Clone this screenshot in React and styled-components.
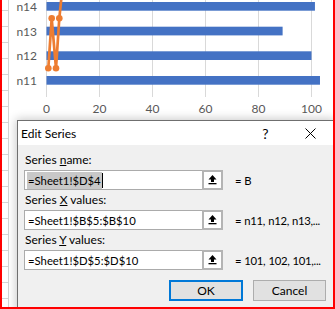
import React from "react";
import styled, { createGlobalStyle } from "styled-components";

const Global = createGlobalStyle`
  html, body { margin: 0; padding: 0; background: #fff; }
`;

const Frame = styled.div`
  position: relative;
  width: 335px;
  height: 309px;
  box-sizing: border-box;
  border: 2px solid #ff0000;
  border-top: none;
  overflow: hidden;
  display: flex;
  background: #fff;
`;

const SheetStrip = styled.div`
  width: 6px;
  flex: none;
  border-right: 1px solid #d4d4d4;
  background-color: #fff;
  background-image: repeating-linear-gradient(
    to bottom,
    transparent 0,
    transparent 15px,
    #d4d4d4 15px,
    #d4d4d4 16px
  );
  background-position: 0 -5px;
`;

const ChartPanel = styled.div`
  flex: 1;
  background: #fff;
  svg {
    display: block;
  }
`;

const Dialog = styled.div`
  position: absolute;
  left: 15px;
  top: 120px;
  width: 317px;
  height: 200px;
  box-sizing: border-box;
  border: 1px solid #6f6f6f;
  background: #f0f0f0;
  box-shadow: 0 0 9px 1px rgba(0, 0, 0, 0.22);
  display: flex;
  flex-direction: column;
  font-family: Lato, "Open Sans", sans-serif;
  font-size: 12px;
  color: #000;
`;

const TitleBar = styled.div`
  height: 24px;
  background: #fff;
  display: flex;
  align-items: center;
`;

const Title = styled.div`
  flex: 1;
  padding-left: 3px;
  font-size: 12px;
`;

const CaptionButton = styled.div`
  width: 45px;
  height: 24px;
  display: flex;
  align-items: center;
  justify-content: center;
  font-size: 14px;
`;

const Body = styled.div`
  padding: 5px 7px 0 6px;
  display: flex;
  flex-direction: column;
`;

const Label = styled.div`
  line-height: 16px;
  margin: 2px 0;
  padding-left: 1px;
  white-space: nowrap;
`;

const FieldRow = styled.div`
  display: flex;
  align-items: center;
  height: 20px;
  gap: 12px;
  font-size: 11.3px;
`;

const RefInput = styled.div`
  display: flex;
  width: 199px;
  height: 20px;
  flex: none;
`;

const TextBox = styled.div`
  flex: 1;
  box-sizing: border-box;
  background: #fff;
  border: 1px solid #ababab;
  border-right: none;
  padding-left: 2px;
  display: flex;
  align-items: center;
  white-space: nowrap;
  overflow: hidden;
`;

const Selection = styled.span`
  display: inline-block;
  height: 17px;
  line-height: 17px;
  padding-left: 1px;
  padding-right: 1px;
  background: #c8c8c8;
`;

const Caret = styled.span`
  display: inline-block;
  width: 1px;
  height: 15px;
  background: #000;
`;

const Value = styled.span`
  padding-left: 1px;
`;

const RefButton = styled.div`
  width: 21px;
  height: 20px;
  box-sizing: border-box;
  border: 2px solid #b4b4b4;
  background: #fff;
  display: flex;
  align-items: center;
  justify-content: center;
`;

const Result = styled.div`
  white-space: nowrap;
  letter-spacing: -0.3px;
  word-spacing: 0.5px;
`;

const ButtonRow = styled.div`
  display: flex;
  justify-content: flex-end;
  gap: 10px;
  margin-top: 10px;
`;

const DialogButton = styled.div`
  width: ${(p) => p.$w}px;
  height: 21px;
  box-sizing: border-box;
  background: #e1e1e1;
  border: ${(p) => (p.$default ? "2px solid #0078d7" : "1px solid #adadad")};
  display: flex;
  align-items: center;
  justify-content: center;
`;

const UploadIcon = () => (
  <svg width="9" height="10" viewBox="0 0 9 10">
    <polygon points="4.5,0 0.5,4.5 3,4.5 3,7 6,7 6,4.5 8.5,4.5" fill="#000" />
    <rect x="0.5" y="8" width="8" height="1.3" fill="#000" />
  </svg>
);

const CloseIcon = () => (
  <svg width="11" height="11" viewBox="0 0 11 11">
    <path d="M0.5 0.5 L10.5 10.5 M10.5 0.5 L0.5 10.5" stroke="#000" strokeWidth="1" fill="none" />
  </svg>
);

const X0 = 46.5;
const SCALE = 2.65;
const bars = [
  { label: "n14", y: 2, v: 101.3 },
  { label: "n13", y: 26.7, v: 89.1 },
  { label: "n12", y: 51.3, v: 100 },
  { label: "n11", y: 76, v: 103.2 },
];
const ticks = [0, 20, 40, 60, 80, 100];
const linePts = [
  [48.3, 68.3],
  [51.7, 18.3],
  [56, 68.3],
  [59.3, 18.3],
];

const Chart = () => (
  <svg width="324" height="307" viewBox="9 0 324 307">
    {ticks.map((t) => (
      <line
        key={t}
        x1={X0 + t * SCALE}
        x2={X0 + t * SCALE}
        y1={0}
        y2={97}
        stroke="#d9d9d9"
        strokeWidth="1"
      />
    ))}
    {bars.map((b) => (
      <g key={b.label}>
        <rect x={X0} y={b.y} width={b.v * SCALE} height={8.7} fill="#4472c4" />
        <text
          x={37}
          y={b.y + 4.6}
          textAnchor="end"
          dominantBaseline="central"
          fontFamily="Lato, sans-serif"
          fontSize="12"
          fill="#595959"
        >
          {b.label}
        </text>
      </g>
    ))}
    {ticks.map((t) => (
      <text
        key={"l" + t}
        x={X0 + t * SCALE}
        y={108}
        textAnchor="middle"
        dominantBaseline="central"
        fontFamily="Lato, sans-serif"
        fontSize="12"
        fill="#595959"
      >
        {t}
      </text>
    ))}
    <polyline
      points={[...linePts, [61.6, -4]].map((p) => p.join(",")).join(" ")}
      fill="none"
      stroke="#ed7d31"
      strokeWidth="2.7"
      strokeLinejoin="round"
    />
    {linePts.map((p, i) => (
      <circle key={i} cx={p[0]} cy={p[1]} r="3.3" fill="#ed7d31" />
    ))}
  </svg>
);

const fields = [
  {
    label: (
      <>
        Series <u>n</u>ame:
      </>
    ),
    value: "=Sheet1!$D$4",
    selected: true,
    result: "= B",
  },
  {
    label: (
      <>
        Series <u>X</u> values:
      </>
    ),
    value: "=Sheet1!$B$5:$B$10",
    result: "= n11, n12, n13,...",
  },
  {
    label: (
      <>
        Series <u>Y</u> values:
      </>
    ),
    value: "=Sheet1!$D$5:$D$10",
    result: "= 101, 102, 101,...",
  },
];

export default function App() {
  return (
    <>
      <Global />
      <Frame>
        <SheetStrip />
        <ChartPanel>
          <Chart />
        </ChartPanel>
        <Dialog>
          <TitleBar>
            <Title>Edit Series</Title>
            <CaptionButton>?</CaptionButton>
            <CaptionButton>
              <CloseIcon />
            </CaptionButton>
          </TitleBar>
          <Body>
            {fields.map((f, i) => (
              <React.Fragment key={i}>
                <Label>{f.label}</Label>
                <FieldRow>
                  <RefInput>
                    <TextBox>
                      {f.selected ? (
                        <>
                          <Selection>{f.value}</Selection>
                          <Caret />
                        </>
                      ) : (
                        <Value>{f.value}</Value>
                      )}
                    </TextBox>
                    <RefButton>
                      <UploadIcon />
                    </RefButton>
                  </RefInput>
                  <Result>{f.result}</Result>
                </FieldRow>
              </React.Fragment>
            ))}
            <ButtonRow>
              <DialogButton $default $w={74}>
                OK
              </DialogButton>
              <DialogButton $w={73}>Cancel</DialogButton>
            </ButtonRow>
          </Body>
        </Dialog>
      </Frame>
    </>
  );
}
